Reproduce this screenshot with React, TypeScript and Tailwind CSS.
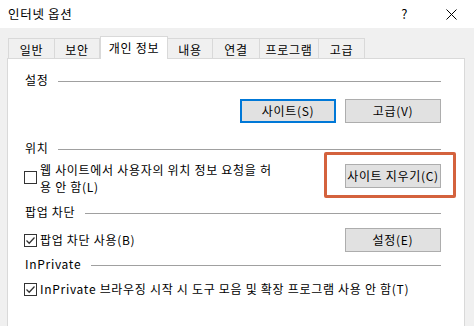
import { ReactNode } from "react";

const FONT = { fontFamily: '"Noto Sans CJK KR", "Noto Sans", sans-serif' };

const tabs = [
  { label: "일반", w: "w-[47px]" },
  { label: "보안", w: "w-[46px]" },
  { label: "개인 정보", w: "w-[68px]", active: true },
  { label: "내용", w: "w-[46px]" },
  { label: "연결", w: "w-[48px]" },
  { label: "프로그램", w: "w-[60px]" },
  { label: "고급", w: "w-[47px]" },
];

function SectionHeader({ title, className = "" }: { title: string; className?: string }) {
  return (
    <div className={`flex items-center h-[16px] ${className}`}>
      <span className="text-[12px] leading-[16px] text-black">{title}</span>
      <div className="flex-1 h-px bg-[#a0a0a0] ml-[10px] mt-[3px]" />
    </div>
  );
}

function Checkbox({ checked }: { checked?: boolean }) {
  return (
    <div className="w-[13px] h-[13px] border border-[#333333] bg-white flex items-center justify-center shrink-0">
      {checked && (
        <svg width="11" height="11" viewBox="0 0 11 11">
          <path d="M1.5 5.5 L4.2 8.2 L9.5 2.5" fill="none" stroke="#333" strokeWidth="1.3" />
        </svg>
      )}
    </div>
  );
}

function Button({ children, focused }: { children: ReactNode; focused?: boolean }) {
  return (
    <button
      className={`w-[96px] h-[24px] bg-[#e1e1e1] text-[12px] text-black flex items-center justify-center tracking-[0.7px] ${
        focused ? "border-2 border-[#0078d7]" : "border border-[#adadad]"
      }`}
    >
      {children}
    </button>
  );
}

export default function App() {
  return (
    <div className="w-[474px] h-[326px] bg-[#f0f0f0] overflow-hidden tracking-[0.7px]" style={FONT}>
      {/* title bar */}
      <div className="h-[28px] bg-white flex items-center pl-[8px]">
        <span className="text-[12.5px] text-black">인터넷 옵션</span>
        <span className="ml-auto text-[13px] text-black mr-[38px]">?</span>
        <svg width="11" height="11" viewBox="0 0 11 11" className="mr-[17px]">
          <path d="M0.5 0.5 L10.5 10.5 M10.5 0.5 L0.5 10.5" stroke="#000" strokeWidth="1" />
        </svg>
      </div>

      {/* tabs */}
      <div className="flex items-end pl-[8px] pt-[8px] h-[30px] relative z-10">
        {tabs.map((t) =>
          t.active ? (
            <div
              key={t.label}
              className={`${t.w} h-[23px] bg-white border border-b-0 border-[#d9d9d9] text-[12px] text-black flex items-start pt-[2px] justify-center -mb-px`}
            >
              {t.label}
            </div>
          ) : (
            <div
              key={t.label}
              className={`${t.w} h-[20px] bg-[#f0f0f0] border border-b-0 border-[#d9d9d9] -ml-px first:ml-0 text-[12px] text-black flex items-center justify-center pt-[2px]`}
            >
              {t.label}
            </div>
          )
        )}
      </div>

      {/* panel */}
      <div className="ml-[7px] w-[458px] h-[280px] bg-white border border-[#d9d9d9] pl-[17px] pr-[23px] pt-[13px] text-[12px] text-black">
        <SectionHeader title="설정" />
        <div className="flex justify-end gap-[9px] mt-[11px]">
          <Button focused>사이트(S)</Button>
          <Button>고급(V)</Button>
        </div>

        <SectionHeader title="위치" className="mt-[17px]" />
        <div className="flex items-start mt-[5px]">
          <div className="mt-[10px] -ml-px">
            <Checkbox />
          </div>
          <div className="ml-[3px] leading-[17px]">
            웹 사이트에서 사용자의 위치 정보 요청을 허<br />용 안 함(L)
          </div>
          <div className="ml-auto mt-[3px] relative">
            <Button>사이트 지우기(C)</Button>
            <div className="absolute -left-[21px] -top-[12px] w-[132px] h-[46px] border-[3px] border-[#d4623d] rounded-[2px] pointer-events-none" />
          </div>
        </div>

        <SectionHeader title="팝업 차단" className="mt-[9px]" />
        <div className="flex items-center mt-[8px] h-[24px]">
          <div className="-ml-px">
            <Checkbox checked />
          </div>
          <span className="ml-[3px]">팝업 차단 사용(B)</span>
          <div className="ml-auto">
            <Button>설정(E)</Button>
          </div>
        </div>

        <SectionHeader title="InPrivate" className="mt-[4px]" />
        <div className="flex items-center mt-[9px] h-[16px]">
          <div className="-ml-px">
            <Checkbox checked />
          </div>
          <span className="ml-[3px]">InPrivate 브라우징 시작 시 도구 모음 및 확장 프로그램 사용 안 함(T)</span>
        </div>
      </div>
    </div>
  );
}
